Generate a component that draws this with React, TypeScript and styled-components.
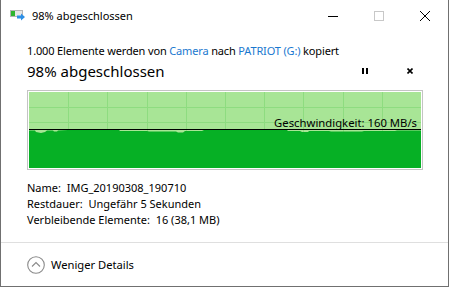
import React from "react";
import styled, { createGlobalStyle } from "styled-components";

const GlobalStyle = createGlobalStyle`
  html, body {
    margin: 0;
    padding: 0;
    background: #ffffff;
  }
  body {
    font-family: "Noto Sans", "Open Sans", sans-serif;
    color: #000;
  }
`;

const Window = styled.div`
  width: 449px;
  height: 287px;
  box-sizing: border-box;
  border: 1px solid #707070;
  border-top: none;
  background: #fff;
  display: flex;
  flex-direction: column;
  overflow: hidden;
`;

const TitleBar = styled.div`
  height: 31px;
  display: flex;
  align-items: center;
  padding-left: 9px;
`;

const TitleText = styled.span`
  font-size: 11px;
  margin-left: 6px;
  flex: 1;
`;

const CaptionButton = styled.div`
  width: 46px;
  height: 31px;
  display: flex;
  align-items: center;
  justify-content: center;
`;

const Body = styled.div`
  padding: 12px 25px 0 26px;
  display: flex;
  flex-direction: column;
`;

const InfoLine = styled.div`
  font-size: 11px;
  line-height: 16px;
  letter-spacing: -0.15px;
  white-space: nowrap;
`;

const Link = styled.span`
  color: #1a78cf;
`;

const HeadingRow = styled.div`
  display: flex;
  align-items: center;
  height: 24px;
  gap: 22px;
`;

const Heading = styled.div`
  font-size: 15px;
  line-height: 20px;
  flex: 1;
`;

const IconButton = styled.div<{ $width: number }>`
  width: ${(p) => p.$width}px;
  display: flex;
  justify-content: center;
  align-items: center;
`;

const Chart = styled.div`
  position: relative;
  margin-top: 7px;
  width: 396px;
  height: 80px;
  box-sizing: border-box;
  border: 1px solid #c4c4c4;
  padding: 1px;
`;

const ChartLabel = styled.span`
  position: absolute;
  right: 5px;
  top: 25px;
  font-size: 11.3px;
  line-height: 14px;
  color: #000;
`;

const Details = styled.div`
  margin-top: 10px;
  display: flex;
  flex-direction: column;
`;

const DetailLine = styled.div`
  font-size: 11px;
  line-height: 16px;
  white-space: nowrap;
`;

const Separator = styled.div`
  margin-top: 14px;
  height: 1px;
  background: #dfdfdf;
`;

const Footer = styled.div`
  flex: 1;
  display: flex;
  align-items: center;
  padding-left: 26px;
  gap: 6px;
  font-size: 11.2px;
`;

const W = 392;
const H = 76;

// top edge of the transfer area, [x, y] in chart coords
const areaTop: [number, number][] = [
  [0, 38.5], [6, 38.5], [7, 40], [12, 41], [16, 40], [18, 38.5], [24, 38.5],
  [25, 39.5], [28, 39.5], [29, 38.5], [39, 38], [90, 38], [91, 39], [118, 39],
  [120, 39.5], [147, 39.5], [149, 40.5], [154, 40.5], [156, 39], [173, 39],
  [175, 38], [258, 38], [259, 39], [271, 39], [273, 40], [279, 40], [280, 39],
  [300, 39], [302, 39.5], [333, 39.5], [335, 39], [366, 39], [368, 38.5], [W, 38.5],
];

const areaPath =
  "M0," + H + " " + areaTop.map(([x, y]) => `L${x},${y}`).join(" ") + ` L${W},${H} Z`;

const SpeedChart = () => {
  const cols = Array.from({ length: 9 }, (_, i) => ((i + 1) * W) / 10);
  const rows = Array.from({ length: 4 }, (_, i) => ((i + 1) * H) / 5);
  return (
    <Chart>
      <svg width={W} height={H} style={{ display: "block" }}>
        <rect x={0} y={0} width={W} height={H} fill="#a8e596" />
        {cols.map((x) => (
          <line key={"c" + x} x1={Math.round(x) + 0.5} x2={Math.round(x) + 0.5} y1={0} y2={H} stroke="#8edc80" />
        ))}
        {rows.map((y) => (
          <line key={"r" + y} y1={Math.round(y) + 0.5} y2={Math.round(y) + 0.5} x1={0} x2={W} stroke="#8edc80" />
        ))}
        <path d={areaPath} fill="#06b025" />
        <line x1={0} x2={W} y1={37.5} y2={37.5} stroke="#000" strokeWidth={1} />
      </svg>
      <ChartLabel>Geschwindigkeit: 160 MB/s</ChartLabel>
    </Chart>
  );
};

const CopyIcon = () => (
  <svg width="16" height="12" viewBox="0 0 16 12">
    <rect x="0.5" y="0.5" width="12" height="6" fill="#e6e6e6" stroke="#b4b4b4" />
    <rect x="1" y="1" width="4" height="5" fill="#2fb52f" />
    <path d="M7 5.5 H11 V3.5 L15 7 L11 10.5 V8.5 H7 Z" fill="#2d8fe6" />
  </svg>
);

const App = () => {
  return (
    <>
      <GlobalStyle />
      <Window>
        <TitleBar>
          <CopyIcon />
          <TitleText>98% abgeschlossen</TitleText>
          <CaptionButton>
            <svg width="10" height="10">
              <line x1="0" x2="10" y1="5.5" y2="5.5" stroke="#000" />
            </svg>
          </CaptionButton>
          <CaptionButton>
            <svg width="10" height="10">
              <rect x="0.5" y="0.5" width="9" height="9" fill="none" stroke="#c8c8c8" />
            </svg>
          </CaptionButton>
          <CaptionButton>
            <svg width="10" height="10">
              <path d="M0 0 L10 10 M10 0 L0 10" stroke="#000" strokeWidth="1" />
            </svg>
          </CaptionButton>
        </TitleBar>
        <Body>
          <InfoLine>
            1.000 Elemente werden von <Link>Camera</Link> nach <Link>PATRIOT (G:)</Link> kopiert
          </InfoLine>
          <HeadingRow>
            <Heading>98% abgeschlossen</Heading>
            <IconButton $width={20}>
              <svg width="6" height="6">
                <rect x="0" y="0" width="2" height="6" fill="#000" />
                <rect x="4" y="0" width="2" height="6" fill="#000" />
              </svg>
            </IconButton>
            <IconButton $width={26}>
              <svg width="6" height="6">
                <path d="M0.5 0.5 L5.5 5.5 M5.5 0.5 L0.5 5.5" stroke="#000" strokeWidth="1.6" />
              </svg>
            </IconButton>
          </HeadingRow>
          <SpeedChart />
          <Details>
            <DetailLine>Name:&nbsp; IMG_20190308_190710</DetailLine>
            <DetailLine>Restdauer:&nbsp; Ungefähr 5 Sekunden</DetailLine>
            <DetailLine>Verbleibende Elemente:&nbsp; 16 (38,1 MB)</DetailLine>
          </Details>
        </Body>
        <Separator />
        <Footer>
          <svg width="18" height="18" viewBox="0 0 18 18">
            <circle cx="9" cy="9" r="8.3" fill="none" stroke="#8a8a8a" strokeWidth="1.1" />
            <path d="M5 10.5 L9 6.5 L13 10.5" fill="none" stroke="#8a8a8a" strokeWidth="1.1" />
          </svg>
          <span>Weniger Details</span>
        </Footer>
      </Window>
    </>
  );
};

export default App;
